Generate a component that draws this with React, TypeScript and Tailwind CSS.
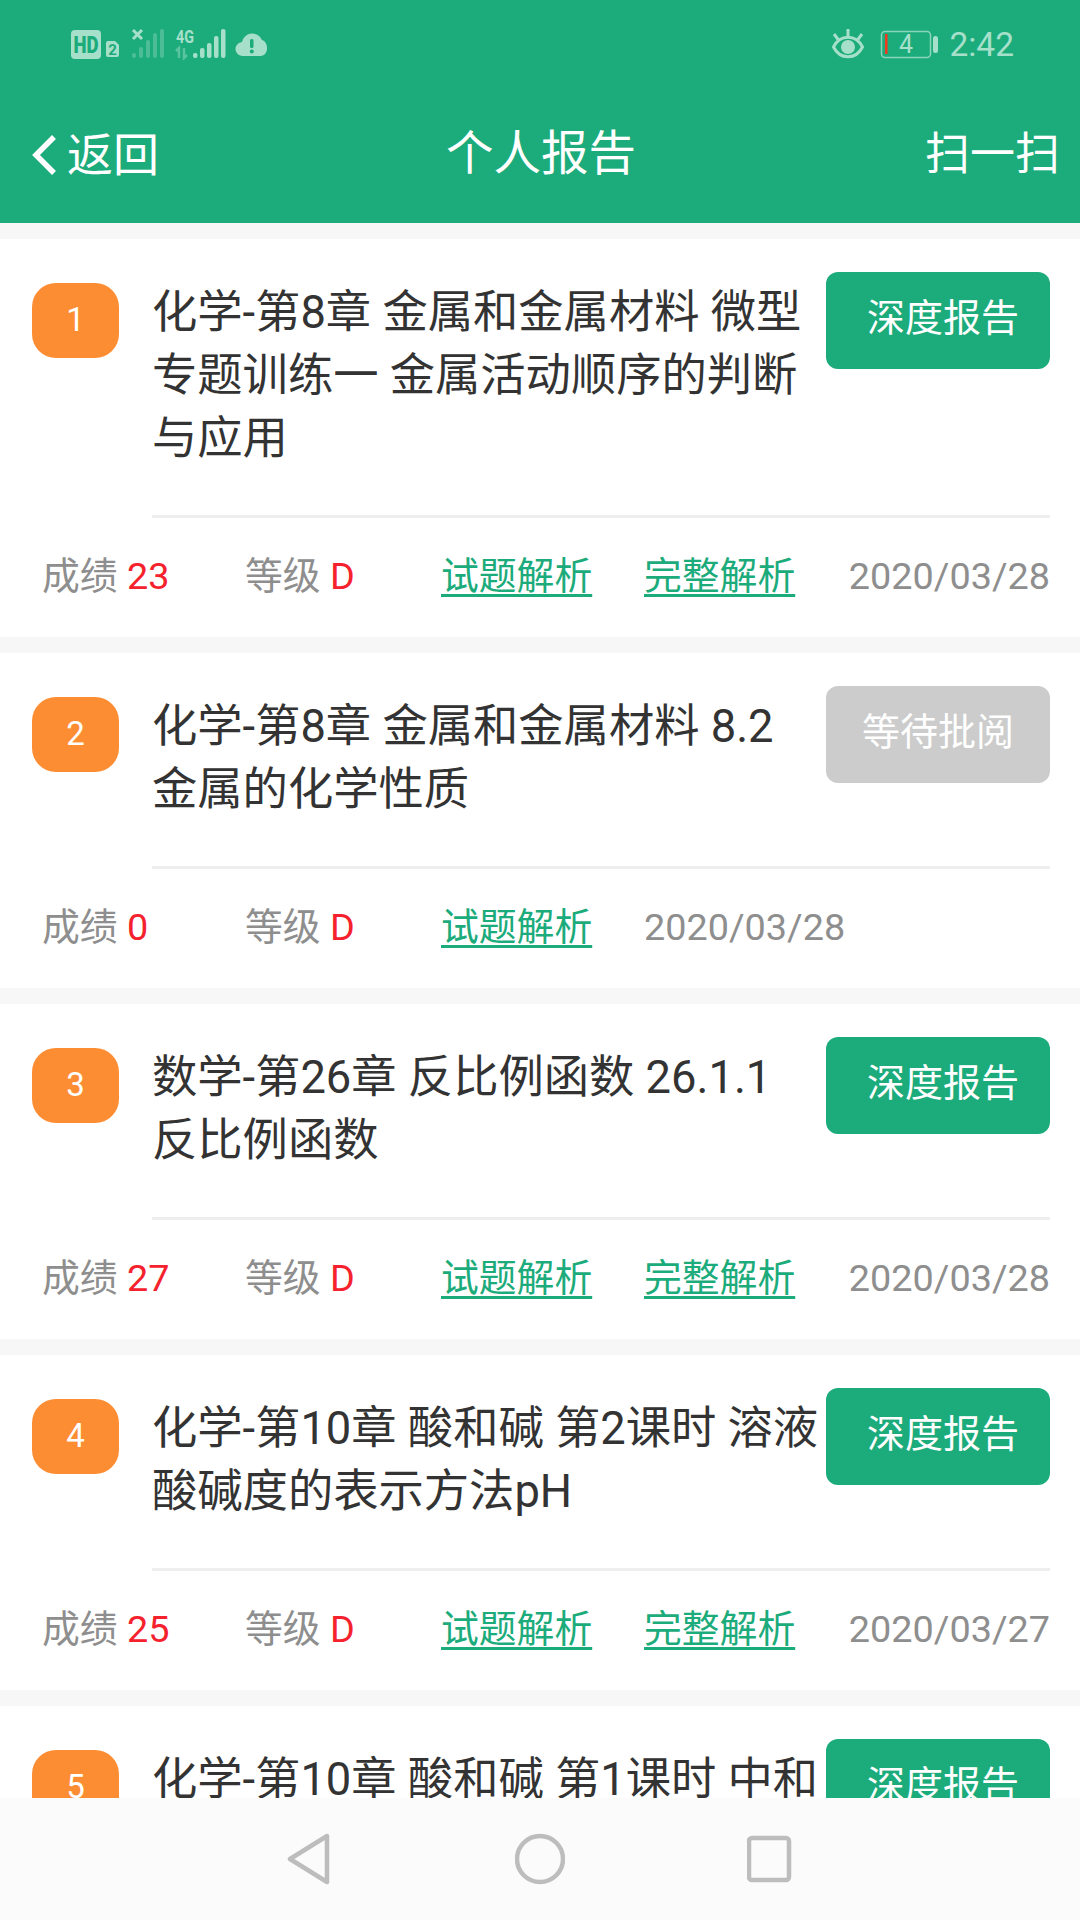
import React from "react";

const reports = [
  {
    id: 1,
    title: "化学-第8章 金属和金属材料 微型专题训练一 金属活动顺序的判断与应用",
    score: 23,
    full: true,
    date: "2020/03/28",
  },
  {
    id: 2,
    title: "化学-第8章 金属和金属材料 8.2 金属的化学性质",
    score: 0,
    full: false,
    date: "2020/03/28",
  },
  {
    id: 3,
    title: "数学-第26章 反比例函数 26.1.1 反比例函数",
    score: 27,
    full: true,
    date: "2020/03/28",
  },
  {
    id: 4,
    title: "化学-第10章 酸和碱 第2课时 溶液酸碱度的表示方法pH",
    score: 25,
    full: true,
    date: "2020/03/27",
  },
  {
    id: 5,
    title: "化学-第10章 酸和碱 第1课时 中和反应",
    score: 30,
    full: true,
    date: "2020/03/27",
  },
];

const LeftStatusIcons = () => (
  <svg width="200" height="32" viewBox="0 0 200 32">
    <rect x="0" y="2" width="30" height="29" rx="4" fill="#a6e0cb" />
    <text x="15" y="24.500" textAnchor="middle" fontFamily="Roboto" fontWeight="900" fontSize="23" fill="#1cab7b" textLength="25" lengthAdjust="spacingAndGlyphs">
      HD
    </text>
    <path d="M37 13h7l4 4v10a2 2 0 0 1-2 2h-9a2 2 0 0 1-2-2v-12a2 2 0 0 1 2-2z" fill="#a6e0cb" />
    <text x="41.500" y="27" textAnchor="middle" fontFamily="Roboto" fontWeight="700" fontSize="15" fill="#1cab7b">
      2
    </text>
    <path d="M62 2l9 9M71 2l-9 9" stroke="#a6e0cb" strokeWidth="3" />
    <g fill="#a6e0cb" opacity="0.35">
      <rect x="61" y="25" width="4" height="5" rx="2" />
      <rect x="68" y="19" width="4" height="11" rx="2" />
      <rect x="75" y="12" width="4" height="18" rx="2" />
      <rect x="82" y="5" width="4" height="25" rx="2" />
      <rect x="89" y="1" width="4" height="29" rx="2" />
    </g>
    <text x="105" y="15" fontFamily="Roboto" fontWeight="700" fontSize="18" fill="#a6e0cb" textLength="18" lengthAdjust="spacingAndGlyphs">
      4G
    </text>
    <path d="M108 30v-10l-3 3M113 20v10l3-3" stroke="#a6e0cb" strokeWidth="2.500" fill="none" opacity="0.45" />
    <g fill="#a6e0cb">
      <rect x="122" y="25" width="4.500" height="5" rx="2" />
      <rect x="129" y="20" width="4.500" height="10" rx="2" />
      <rect x="136" y="15" width="4.500" height="15" rx="2" />
      <rect x="143" y="8" width="4.500" height="22" rx="2" />
      <rect x="150" y="1" width="4.500" height="29" rx="2" />
    </g>
    <path d="M172 28a7 7 0 0 1-1-14 10.500 10.500 0 0 1 20-2 6 8 0 0 1 5 9 7 7 0 0 1-6 7z" fill="#a6e0cb" />
    <rect x="179" y="11" width="3.500" height="9" rx="1.500" fill="#1cab7b" />
    <circle cx="180.800" cy="23.500" r="2" fill="#1cab7b" />
  </svg>
);

const RightStatusIcons = () => (
  <svg width="107" height="32" viewBox="0 0 107 32">
    <path d="M1.500 19C8 6 24 6 30.500 19C24 32 8 32 1.500 19Z" fill="none" stroke="#a6e0cb" strokeWidth="3" />
    <circle cx="16" cy="19" r="7" fill="#a6e0cb" />
    <path d="M16 1v8M2 6l4.500 6M30 6l-4.500 6" stroke="#a6e0cb" strokeWidth="3" />
    <rect x="49.500" y="3.500" width="49" height="26" rx="3.500" fill="none" stroke="#a6e0cb" strokeWidth="1.500" opacity="0.8" />
    <rect x="53" y="6" width="2.500" height="20" fill="#f0391f" />
    <text x="74" y="25" textAnchor="middle" fontFamily="Roboto" fontSize="25" fill="#a6e0cb">
      4
    </text>
    <rect x="101" y="8" width="5" height="17" rx="2.500" fill="#a6e0cb" />
  </svg>
);

const ReportCard = ({ report }: { report: (typeof reports)[number] }) => {
  return (
    <div className="bg-white shrink-0">
      <div className="flex">
        <div className="ml-[32px] mt-[44px] mr-[33px] w-[87px] h-[75px] shrink-0 rounded-[24px] bg-[#fd8d33] flex items-center justify-center pb-[2px] text-white text-[33px] leading-none">
          {report.id}
        </div>
        <div className="w-[670px] mt-[42px] mb-[45px] shrink-0 text-[#333] text-[45.300px] leading-[63px]">
          {report.title}
        </div>
        {report.full ? (
          <div className="ml-[4px] mt-[33px] w-[224px] h-[97px] shrink-0 rounded-[12px] bg-[#1cab7b] text-white text-[38px] flex items-center justify-center pb-[4px] pl-[10px]">
            深度报告
          </div>
        ) : (
          <div className="ml-[4px] mt-[33px] w-[224px] h-[97px] shrink-0 rounded-[12px] bg-[#cccccc] text-white text-[38px] flex items-center justify-center pb-[4px]">
            等待批阅
          </div>
        )}
      </div>
      <div className="ml-[152px] mr-[30px] h-[3px] bg-[#eeeeee]" />
      <div className="h-[119px] pl-[42px] pr-[30px] pb-[3px] flex items-center text-[37.800px] text-[#8e8e8e]">
        <div className="w-[203px]">
          成绩 <span className="text-[#f5222d]">{report.score}</span>
        </div>
        <div className="w-[196px]">
          等级 <span className="text-[#f5222d]">D</span>
        </div>
        <div className="w-[203px] text-[#1cab7b] underline underline-offset-[5px]">试题解析</div>
        {report.full && (
          <div className="text-[#1cab7b] underline underline-offset-[5px]">完整解析</div>
        )}
        <div className={report.full ? "ml-auto" : ""}>{report.date}</div>
      </div>
    </div>
  );
};

const App = () => {
  return (
    <div className="w-[1080px] h-[1920px] flex flex-col overflow-hidden bg-[#f7f7f7] [font-family:Roboto,'Noto_Sans_CJK_SC',sans-serif]">
      <div className="bg-[#1cab7b] h-[223px] shrink-0">
        <div className="h-[84px] pt-[28px] pl-[71px] pr-[66px] flex justify-between items-start">
          <LeftStatusIcons />
          <div className="flex items-start gap-[10px]">
            <RightStatusIcons />
            <div className="text-[#a6e0cb] text-[33.500px] leading-[34px]">2:42</div>
          </div>
        </div>
        <div className="h-[139px] pl-[31px] pr-[20px] pt-[3px] flex items-center justify-between relative text-white text-[46px]">
          <div className="flex items-center gap-[10px]">
            <svg width="26" height="42" viewBox="0 0 26 42" fill="none">
              <path d="M23 3L5 21L23 39" stroke="white" strokeWidth="5.500" />
            </svg>
            <span>返回</span>
          </div>
          <div className="absolute left-[446px] text-[47.500px]">个人报告</div>
          <div className="text-[45px]">扫一扫</div>
        </div>
      </div>

      <div className="flex-1 min-h-0 overflow-hidden flex flex-col gap-[16px] pt-[16px]">
        {reports.map((report) => (
          <ReportCard key={report.id} report={report} />
        ))}
      </div>

      <div className="h-[122px] shrink-0 bg-[#fbfbfb] flex items-center pl-[283px] gap-[182px]">
        <svg width="50" height="52" viewBox="0 0 50 52" fill="none">
          <path d="M44 3L7 26L44 49Z" stroke="#bdbdbd" strokeWidth="4.500" strokeLinejoin="round" />
        </svg>
        <svg width="50" height="52" viewBox="0 0 50 52" fill="none">
          <circle cx="25" cy="26" r="23" stroke="#bdbdbd" strokeWidth="4.500" />
        </svg>
        <svg width="50" height="52" viewBox="0 0 50 52" fill="none">
          <rect x="2" y="5" width="40" height="42" rx="3" stroke="#bdbdbd" strokeWidth="4.500" />
        </svg>
      </div>
    </div>
  );
};

export default App;
